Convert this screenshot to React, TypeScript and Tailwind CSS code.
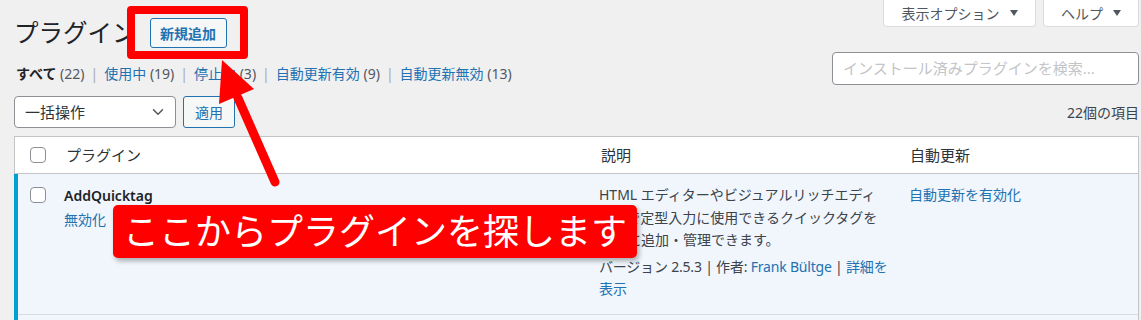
import { ChevronDown } from "lucide-react";

const Tri = () => (
  <svg width="8" height="6" viewBox="0 0 8 6" className="ml-[10px]">
    <path d="M0 0h8L4 6z" fill="#50575e" />
  </svg>
);

const Box = () => (
  <div className="w-[16px] h-[16px] rounded-[4px] border border-[#8c8f94] bg-white" />
);

const Sep = () => <span className="mx-[6px] text-[#a7aaad]">|</span>;

const App = () => {
  return (
    <div className="relative w-[1141px] h-[320px] overflow-hidden bg-[#f0f0f1] pl-[14px] pr-[2px] font-['Noto_Sans','Noto_Sans_CJK_JP',sans-serif] text-[#3c434a]">
      {/* header */}
      <div className="flex justify-between h-[48px]">
        <div className="flex items-center gap-[13px] pt-[18px]">
          <h1 className="text-[24.5px] leading-[30px] text-[#1d2327] font-normal">プラグイン</h1>
          <button
            type="button"
            className="h-[30px] w-[77px] rounded-[3px] border border-[#2271b1] bg-[#f6f7f7] text-[14px] font-semibold text-[#2271b1]"
          >
            新規追加
          </button>
        </div>
        <div className="flex gap-[7px] self-start">
          <div className="flex h-[27px] w-[153px] items-center justify-center rounded-b-[4px] border border-t-0 border-[#dcdcde] bg-white text-[14px] text-[#50575e]">
            表示オプション
            <Tri />
          </div>
          <div className="flex h-[27px] w-[96px] items-center justify-center rounded-b-[4px] border border-t-0 border-[#dcdcde] bg-white text-[14px] text-[#50575e]">
            ヘルプ
            <Tri />
          </div>
        </div>
      </div>

      {/* filters + search */}
      <div className="mt-[4px] flex justify-between">
        <div className="pt-[12px] pl-[2px] text-[14px] leading-[20px] text-[#50575e]">
          <span className="font-bold text-[#1d2327]">すべて</span> (22)
          <Sep />
          <span className="text-[#2271b1]">使用中</span> (19)
          <Sep />
          <span className="text-[#2271b1]">停止中</span> (3)
          <Sep />
          <span className="text-[#2271b1]">自動更新有効</span> (9)
          <Sep />
          <span className="text-[#2271b1]">自動更新無効</span> (13)
        </div>
        <div className="flex h-[33px] w-[307px] items-center rounded-[4px] border border-[#8c8f94] bg-white pl-[10px] text-[15px] text-[#c3c4c7]">
          インストール済みプラグインを検索...
        </div>
      </div>

      {/* tablenav */}
      <div className="mt-[11px] flex items-center justify-between">
        <div className="flex gap-[7px]">
          <div className="flex h-[32px] w-[162px] items-center justify-between rounded-[4px] border border-[#8c8f94] bg-white pl-[10px] pr-[8px] text-[15px] text-[#2c3338]">
            一括操作
            <ChevronDown size={18} strokeWidth={2} className="text-[#50575e]" />
          </div>
          <button
            type="button"
            className="h-[32px] w-[52px] rounded-[3px] border border-[#2271b1] bg-[#f6f7f7] text-[14px] text-[#2271b1]"
          >
            適用
          </button>
        </div>
        <div className="text-[14px] text-[#3c434a]">22個の項目</div>
      </div>

      {/* table */}
      <div className="mt-[8px] border border-[#c3c4c7] bg-white">
        <div className="grid h-[37px] grid-cols-[49px_535px_310px_1fr] items-center border-b border-[#c3c4c7] text-[15px] text-[#2c3338]">
          <div className="pl-[15px]">
            <Box />
          </div>
          <div className="pl-[2px]">プラグイン</div>
          <div className="pl-[2px]">説明</div>
          <div className="pl-[1px]">自動更新</div>
        </div>

        <div className="-ml-px flex bg-[#f0f6fc]">
          <div className="w-[4px] bg-[#00a0d2]" />
          <div className="grid flex-1 grid-cols-[46px_535px_310px_1fr] border-b border-[#dcdcde] pb-[13px]">
            <div className="pl-[12px] pt-[13px]">
              <Box />
            </div>
            <div className="pt-[12px]">
              <div className="text-[14px] font-semibold leading-[20px] text-[#1d2327]">AddQuicktag</div>
              <div className="mt-[4px] text-[14px] leading-[20px] text-[#2271b1]">無効化</div>
            </div>
            <div className="pt-[10px] text-[14px] leading-[22.5px] text-[#3c434a]">
              <div>HTML エディターやビジュアルリッチエディ</div>
              <div>ターで定型入力に使用できるクイックタグを</div>
              <div>簡単に追加・管理できます。</div>
              <div className="mt-[4px] tracking-[-0.2px]">
                バージョン 2.5.3 | 作者: <span className="text-[#2271b1]">Frank Bültge</span> |{" "}
                <span className="text-[#2271b1]">詳細を</span>
              </div>
              <div className="text-[#2271b1]">表示</div>
            </div>
            <div className="pt-[10px] text-[14px] leading-[22.5px] text-[#2271b1]">自動更新を有効化</div>
          </div>
        </div>

        <div className="-ml-px flex h-[10px] bg-[#f0f6fc]">
          <div className="w-[4px] bg-[#00a0d2]" />
        </div>
      </div>

      {/* annotations */}
      <div className="absolute left-[127px] top-[6px] h-[53px] w-[121px] rounded-[4px] border-[8px] border-[#ff0000]" />
      <svg className="pointer-events-none absolute left-0 top-0" width="1141" height="320" viewBox="0 0 1141 320">
        <polygon points="222,60 219,104 254,89" fill="#ff0000" />
        <line x1="238" y1="98" x2="275" y2="182" stroke="#ff0000" strokeWidth="9" strokeLinecap="round" />
      </svg>
      <div className="absolute left-[113px] top-[205px] flex h-[53px] w-[524px] items-center justify-center rounded-[5px] bg-[#ff0000] text-[36px] leading-none text-white shadow-[2px_3px_5px_rgba(0,0,0,0.3)]">
        ここからプラグインを探します
      </div>
    </div>
  );
};

export default App;
